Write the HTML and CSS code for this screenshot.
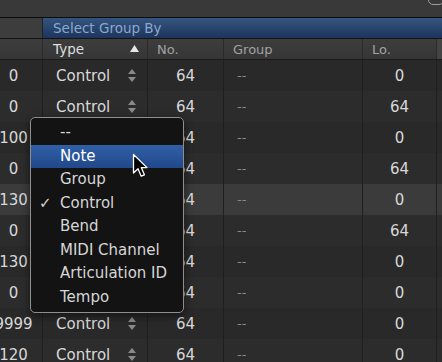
FILE: index.html
```html
<!DOCTYPE html>
<html lang="en">
<head>
  <meta charset="UTF-8">
  <title>Select Group By</title>
  <link rel="stylesheet" href="styles.css">
</head>
<body>
 <div class="stage">
   <div class="table">
     <div class="toolbar"><span class="toolBtn"></span></div>
     <div class="band">
       <div class="bandLeft"></div>
       <div class="bandTitle">Select Group By</div>
     </div>
     <div class="grid head">
       <div class="cell"></div>
       <div class="cell typeHead">Type
         <svg class="sortIcon" width="9" height="7" viewBox="0 0 9 7"><polygon points="0,7 4.5,0 9,7" fill="#e6e6e6"/></svg>
       </div>
       <div class="cell">No.</div>
       <div class="cell">Group</div>
       <div class="cell">Lo.</div>
       <div class="cell edge"></div>
     </div>
     <div id="rows"></div>
   </div>

   <div class="menu">
     <div class="item">--</div>
     <div class="item active">Note</div>
     <div class="item">Group</div>
     <div class="item checked">Control</div>
     <div class="item">Bend</div>
     <div class="item">MIDI Channel</div>
     <div class="item">Articulation ID</div>
     <div class="item">Tempo</div>
   </div>

   <svg class="cursor" width="18" height="27" viewBox="0 0 18 27">
     <path d="M1.5 1.5 L1.5 20 L6 15.8 L9.2 23.2 L12.4 21.8 L9.3 14.6 L15 14.6 Z" fill="#000" stroke="#fff" stroke-width="1.3" stroke-linejoin="round"/>
   </svg>
 </div>

 <script>
   // channel / low values for each row
   const first = [0, 0, 100, 0, 130, 0, 130, 0, 9999, 120];
   const lo    = [0, 64, 0, 64, 0, 64, 0, 0, 0, 0];
   const updown = '<svg class="updown" width="8" height="13" viewBox="0 0 8 13">' +
     '<polygon points="0,5 4,0 8,5" fill="#8a8a8a"/><polygon points="0,8 4,13 8,8" fill="#8a8a8a"/></svg>';

   const rows = document.getElementById('rows');
   first.forEach((v, i) => {
     const row = document.createElement('div');
     row.className = 'grid row' + (i % 2 ? ' alt' : '') + (i === 4 ? ' hilite' : '');
     row.innerHTML =
       `<div class="cell num">${v}</div>` +
       `<div class="cell type"><span>Control</span>${updown}</div>` +
       `<div class="cell num">64</div>` +
       `<div class="cell dash">--</div>` +
       `<div class="cell num">${lo[i]}</div>` +
       `<div class="cell edge"></div>`;
     rows.appendChild(row);
   });
 </script>
</body>
</html>
```

FILE: styles.css
```css
html,body{margin:0;padding:0;background:#2a2a2b;overflow:hidden;}
body{font-family:"DejaVu Sans",sans-serif;color:#d8d8d8;}

.stage{position:relative;width:442px;height:362px;overflow:hidden;}
.table{margin-left:-15px;width:457px;}

/* toolbar strip */
.toolbar{height:17px;background:#393939;border-bottom:1px solid #0c0c0c;
         display:flex;justify-content:flex-end;overflow:hidden;}
.toolBtn{width:16px;height:16px;margin-top:-11px;margin-right:-2px;
         border:1px solid #9c9c9c;border-radius:5px;box-sizing:border-box;}

/* select group band */
.band{display:flex;height:20px;border-bottom:1px solid #141414;}
.bandLeft{width:58px;background:#3d3d3d;border-right:1px solid #222;box-sizing:border-box;}
.bandTitle{flex:1;background:linear-gradient(#34557f,#1c355c);color:#8ea7cc;
           font-size:13.5px;line-height:20px;padding-left:10px;}

/* grid */
.grid{display:grid;grid-template-columns:58px 105px 76px 139px 74px 1fr;}
.cell{border-right:1px solid #1f1f1f;box-sizing:border-box;display:flex;align-items:center;white-space:nowrap;}
.cell.edge{border-right:0;}

.head{height:20px;background:linear-gradient(#3d3d3d,#363636);border-bottom:1px solid #1a1a1a;
      font-size:13px;color:#a2a2a2;}
.head .cell{padding-left:9px;border-right-color:#2a2a2a;}
.head .edge{background:#444;}
.typeHead{justify-content:space-between;padding-right:8px;color:#dedede;padding-left:10px !important;font-size:13.5px;}
.typeHead .sortIcon{margin-top:-2px;}

.row{height:31px;background:#29292a;font-size:15px;}
.row.alt{background:#2c2c2d;}
.row.hilite{background:#3b3b3b;}
.num{justify-content:center;}
.type{justify-content:space-between;padding:0 11px 0 13px;}
.dash{padding-left:13px;color:#8a8a8a;font-size:13px;}

/* popup menu */
.menu{position:absolute;left:30px;top:117px;width:154px;padding:3px 0;
      background:#131313;border:1px solid #8e8e8e;border-radius:5px;
      box-sizing:border-box;box-shadow:0 3px 8px rgba(0,0,0,.5);}
.item{position:relative;height:23.5px;line-height:23.5px;padding-left:29px;font-size:15px;color:#d6d6d6;}
.item.active{background:linear-gradient(#3160a6,#20488b);color:#fff;}
.item.checked::before{content:"✓";position:absolute;left:8px;top:0;}

.cursor{position:absolute;left:132px;top:153px;}
```
